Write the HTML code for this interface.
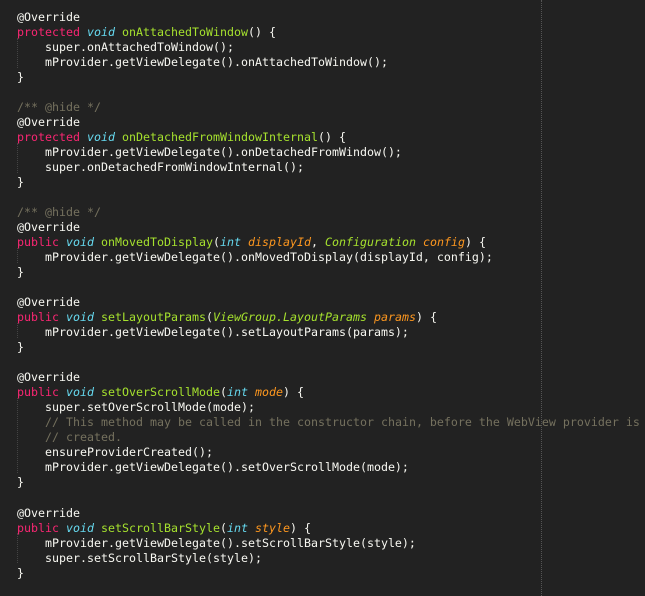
<!DOCTYPE html><html><head><style>
html,body{margin:0;background:#222;width:645px;height:596px;overflow:hidden}
pre{margin:0;position:absolute;left:17px;top:10px;font-family:"DejaVu Sans Mono","Liberation Mono",monospace;font-size:11.63px;line-height:15.02px;color:#f8f8f2}
.k{color:#f92672}.t{color:#66d9ef;font-style:italic}.f{color:#a6e22e}.c{color:#75715e}.p{color:#fd971f;font-style:italic}.g{color:#a6e22e;font-style:italic}
.vl{position:absolute;left:541px;top:0;height:596px;border-left:1px dotted #555}
.ig{position:absolute;left:17px;border-left:1px dotted #444}
</style></head><body><div class="vl"></div>
<div class="ig" style="top:38px;height:30px"></div>
<div class="ig" style="top:143px;height:30px"></div>
<div class="ig" style="top:248px;height:15px"></div>
<div class="ig" style="top:323px;height:15px"></div>
<div class="ig" style="top:398px;height:75px"></div>
<div class="ig" style="top:533px;height:30px"></div>
<pre>@Override
<span class="k">protected</span> <span class="t">void</span> <span class="f">onAttachedToWindow</span>() {
    super.onAttachedToWindow();
    mProvider.getViewDelegate().onAttachedToWindow();
}

<span class="c">/** @hide */</span>
@Override
<span class="k">protected</span> <span class="t">void</span> <span class="f">onDetachedFromWindowInternal</span>() {
    mProvider.getViewDelegate().onDetachedFromWindow();
    super.onDetachedFromWindowInternal();
}

<span class="c">/** @hide */</span>
@Override
<span class="k">public</span> <span class="t">void</span> <span class="f">onMovedToDisplay</span>(<span class="t">int</span> <span class="p">displayId</span>, <span class="g">Configuration</span> <span class="p">config</span>) {
    mProvider.getViewDelegate().onMovedToDisplay(displayId, config);
}

@Override
<span class="k">public</span> <span class="t">void</span> <span class="f">setLayoutParams</span>(<span class="g">ViewGroup.LayoutParams</span> <span class="p">params</span>) {
    mProvider.getViewDelegate().setLayoutParams(params);
}

@Override
<span class="k">public</span> <span class="t">void</span> <span class="f">setOverScrollMode</span>(<span class="t">int</span> <span class="p">mode</span>) {
    super.setOverScrollMode(mode);
    <span class="c">// This method may be called in the constructor chain, before the WebView provider is</span>
    <span class="c">// created.</span>
    ensureProviderCreated();
    mProvider.getViewDelegate().setOverScrollMode(mode);
}

@Override
<span class="k">public</span> <span class="t">void</span> <span class="f">setScrollBarStyle</span>(<span class="t">int</span> <span class="p">style</span>) {
    mProvider.getViewDelegate().setScrollBarStyle(style);
    super.setScrollBarStyle(style);
}</pre></body></html>
